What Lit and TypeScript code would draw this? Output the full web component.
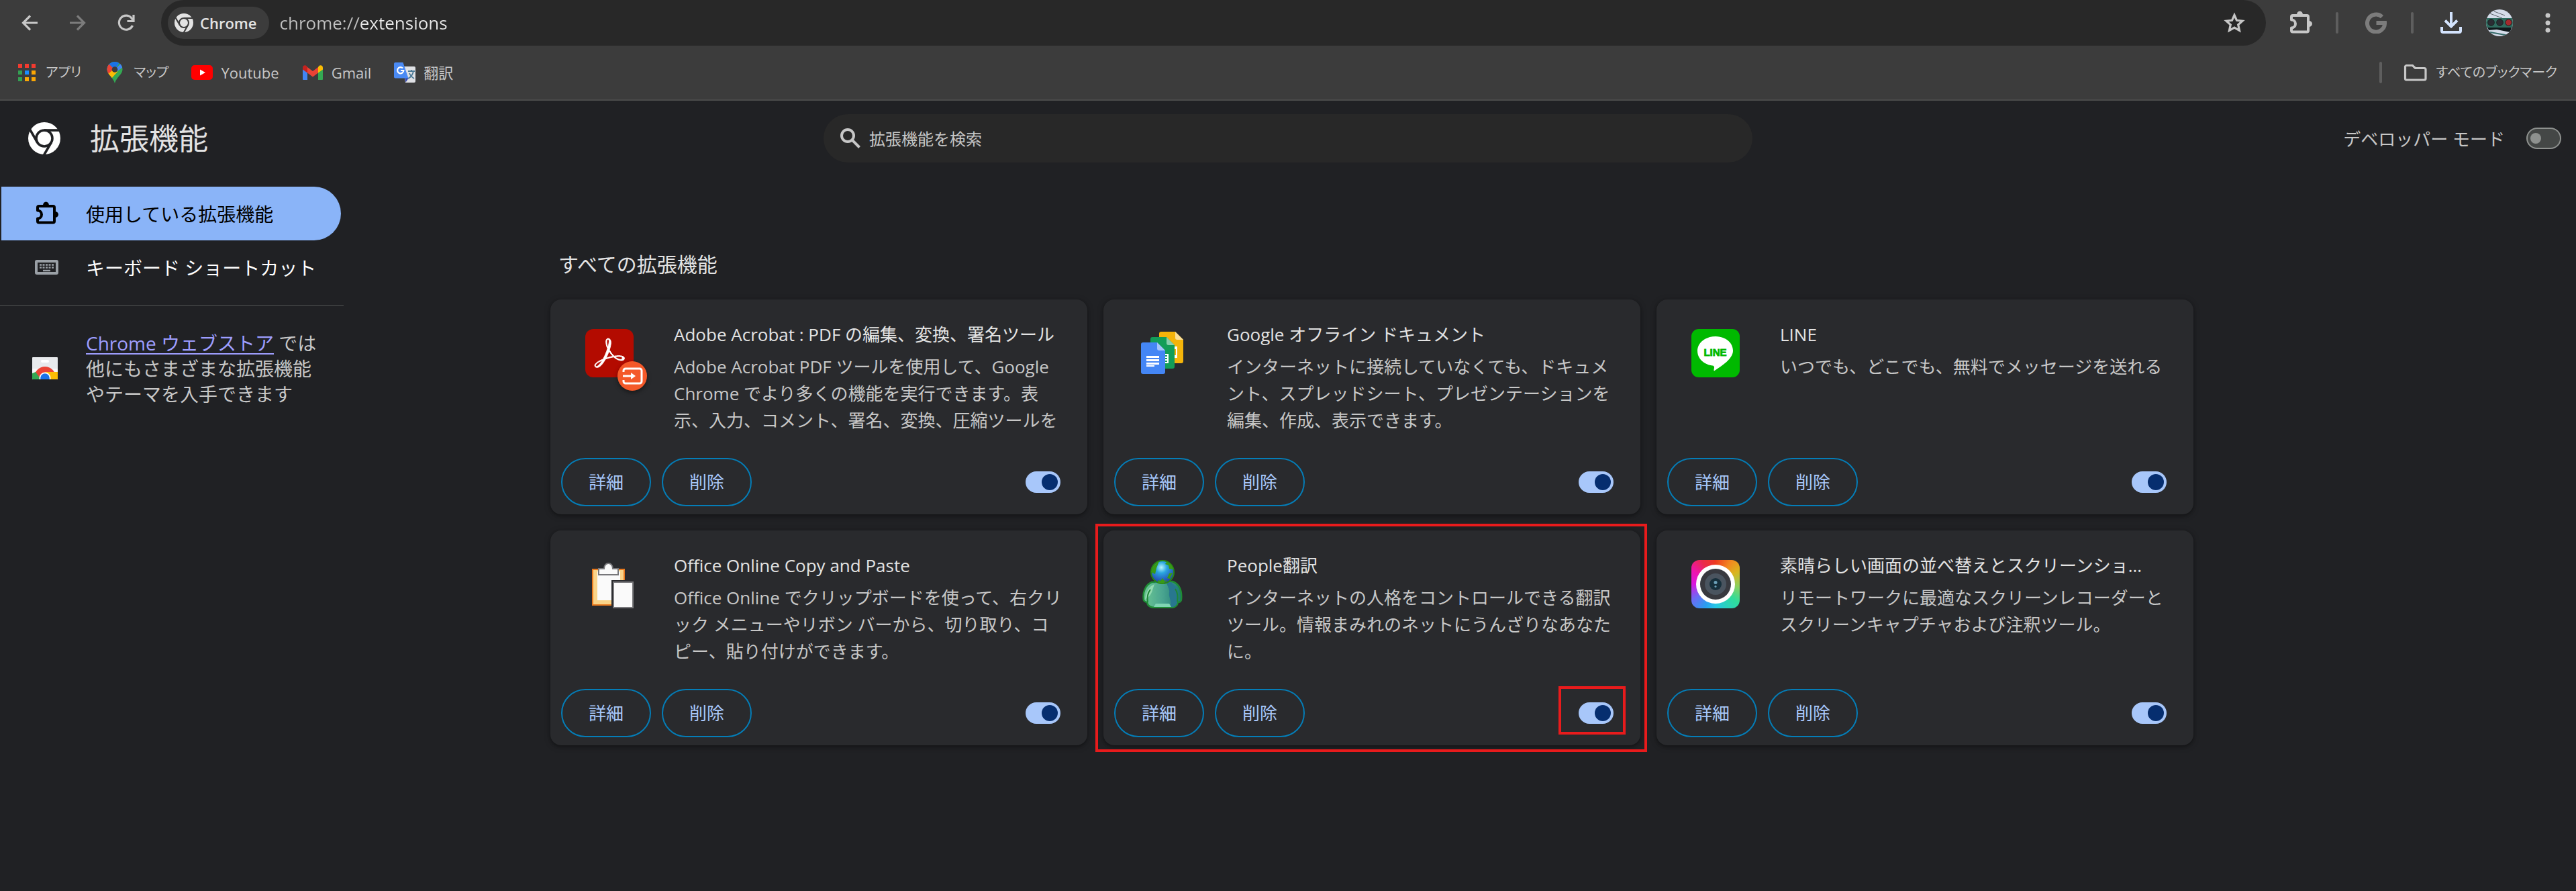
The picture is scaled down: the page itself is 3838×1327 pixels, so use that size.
import { LitElement, html, css, svg, nothing, TemplateResult } from "lit";
import { customElement, property } from "lit/decorators.js";

const chromeMark = (gap: string) => svg`
  <circle cx="24" cy="24" r="24" fill="currentColor"/>
  <g fill="none" stroke=${gap} stroke-width="3.6">
    <circle cx="24" cy="24" r="12"/>
    <path d="M24 12H48"/>
    <path d="M24 12H48" transform="rotate(120 24 24)"/>
    <path d="M24 12H48" transform="rotate(240 24 24)"/>
  </g>`;

const puzzle = svg`
  <path d="M5 7H26a2 2 0 0 1 2 2V29.500a2 2 0 0 1-2 2H5a2 2 0 0 1-2-2V25.500a5 5 0 0 0 0-12V9a2 2 0 0 1 2-2Z" fill="none" stroke="currentColor" stroke-width="4" stroke-linejoin="round"/>
  <path d="M11 6a4.500 5.500 0 0 1 9 0ZM29 15a5 4.500 0 0 1 0 9Z" fill="currentColor"/>`;

const acrobat = html`<svg class="logo" viewBox="0 0 72 72" aria-hidden="true">
  <rect width="72" height="72" rx="12" fill="#b30b00"/>
  <g transform="translate(14 13.500) scale(1.85)">
    <path fill="#fff" stroke="#fff" stroke-width=".5" d="M23.63 15.3c-.71-.745-2.166-1.17-4.224-1.17-1.1 0-2.377.106-3.761.354a19.443 19.443 0 0 1-2.307-2.661c-.532-.71-.994-1.49-1.42-2.236.817-2.484 1.207-4.507 1.207-5.962 0-1.632-.603-3.336-2.342-3.336-.532 0-1.065.32-1.349.781-.78 1.384-.425 4.4.923 7.381a60.277 60.277 0 0 1-1.703 4.507c-.568 1.349-1.207 2.733-1.917 4.01C2.834 18.53.314 20.34.03 21.758c-.106.533.071 1.03.462 1.42.142.107.639.533 1.49.533 2.59 0 5.323-4.188 6.707-6.707 1.065-.355 2.13-.71 3.194-.994a34.963 34.963 0 0 1 3.407-.745c2.732 2.448 5.145 2.839 6.352 2.839 1.49 0 2.023-.604 2.2-1.1.32-.64.106-1.349-.213-1.704zm-1.42 1.03c-.107.532-.64.887-1.384.887-.213 0-.39-.036-.604-.071-1.348-.32-2.626-.994-3.903-2.059a17.717 17.717 0 0 1 2.98-.248c.746 0 1.385.035 1.81.142.497.106 1.278.426 1.1 1.348zm-7.524-1.668a38.01 38.01 0 0 0-2.945.674 39.68 39.68 0 0 0-2.52.745 40.05 40.05 0 0 0 1.207-2.555c.426-.994.78-2.023 1.136-2.981.354.603.745 1.207 1.135 1.739a50.127 50.127 0 0 0 1.987 2.378zM10.038 1.46a.768.768 0 0 1 .674-.425c.745 0 .887.851.887 1.526 0 1.135-.355 2.874-.958 4.861-1.03-2.768-1.1-5.074-.603-5.962zM6.134 17.997c-1.81 2.981-3.549 4.826-4.613 4.826a.872.872 0 0 1-.532-.177c-.213-.213-.32-.461-.249-.745.213-1.065 2.271-2.555 5.394-3.904Z"/>
  </g></svg>`;

const page = (x: number, y: number, fill: string, fold: string) => svg`
  <g transform="translate(${x} ${y})">
    <path d="M3 0H24L36 12V44a3 3 0 0 1-3 3H3a3 3 0 0 1-3-3V3a3 3 0 0 1 3-3Z" fill=${fill}/>
    <path d="M24 0L36 12H27a3 3 0 0 1-3-3Z" fill=${fold}/>
  </g>`;

const docs = html`<svg class="logo" viewBox="0 0 72 72" aria-hidden="true">
  ${page(31, 4, "#f4b40a", "#fbe09a")}
  <rect x="48" y="26" width="10" height="17" fill="#fff"/><rect x="50" y="30" width="6" height="9" fill="#f4b40a"/>
  ${page(18, 12, "#129d58", "#88ceac")}
  <path d="M34 37H45V51H34Z" fill="#fff"/><path d="M34 39h9v2h-9Zm0 4h9v2h-9Zm0 4h9v2h-9Z" fill="#129d58"/>
  ${page(4, 20, "#4486f5", "#a5c6fb")}
  <path d="M12 40H31v3H12Zm0 5H31v3H12Zm0 5H31v3H12Zm0 4H24v2H12Z" fill="#fff"/>
</svg>`;

const line = html`<svg class="logo" viewBox="0 0 72 72" aria-hidden="true">
  <rect width="72" height="72" rx="11" fill="#00b900"/>
  <path d="M36 11c15 0 26 9.500 26 21.500C62 44 45 55.500 34.500 62c-1 .600-1.300-.200-1-1.500.800-3.500 1-5.500-2-6C18 52.500 9 44 9 32.500 9 20.500 21 11 36 11Z" fill="#fff"/>
  <text x="35.500" y="39.500" text-anchor="middle" class="line-word" fill="#00b900" stroke="#00b900" stroke-width=".8">LINE</text>
</svg>`;

const clipboard = html`<svg class="logo" viewBox="0 0 72 72" aria-hidden="true">
  <rect x="11" y="14" width="47" height="53" fill="#fad489" stroke="#e8791e" stroke-width="2"/>
  <rect x="18" y="17" width="34" height="43" fill="#fafafa"/>
  <path d="M39 30H60V68H39Z" fill="#292a2d"/>
  <path d="M20 13h8c0-5 3-8 6.500-8s6.500 3 6.500 8h8v9H20Z" fill="#fafafa" stroke="#77777a" stroke-width="2"/>
  <rect x="42" y="33" width="29" height="38" fill="#fafafa" stroke="#77777a" stroke-width="2"/>
</svg>`;

const people = html`<svg class="logo" viewBox="0 0 72 72" aria-hidden="true">
  <defs>
    <radialGradient id="globe" cx=".45" cy=".3" r=".7"><stop offset="0" stop-color="#b5f4fb"/><stop offset=".35" stop-color="#2aa5e0"/><stop offset="1" stop-color="#2338a8"/></radialGradient>
    <linearGradient id="body"><stop offset="0" stop-color="#6cc793"/><stop offset=".5" stop-color="#4aa590"/><stop offset="1" stop-color="#1c7872"/></linearGradient>
  </defs>
  <path d="M20 33C10 37 6 49 8 60c1 2 4 3 5 3 1 6 6 8 12 8h23c6 0 10-3 11-8 2 0 5-1 5-4 1-12-2-23-13-27Z" fill="url(#body)" stroke="#1f8c35" stroke-width="2.500"/>
  <path d="M24 34c4-2 14-3 18 0 1 5 5 9 4 15s4 13 2 21h4c8-3 6-11 7-17l-3-13-7-7Z" fill="#28778f"/>
  <path d="M10 59c5-3 9-7 11-14l3-9c-8 3-13 12-14 23Z" fill="#93dab0"/>
  <path d="M18 44c-4 5-5 13-4 19M55 43c4 6 4 13 3 19" fill="none" stroke="#1d8737" stroke-width="2"/>
  <path d="M26 65h20l3 5H23Z" fill="#80d6b3"/>
  <circle cx="36" cy="18" r="17" fill="url(#globe)" stroke="#278715" stroke-width="2"/>
  <path d="M22 9c4-2 5-6 9-7l-4 10-2 9-6-3Zm20-6c5 1 9 6 10 11l-6-1-1-5-5-2ZM46 20l5-1-4 9-4-1ZM29 30l4 1 3-4 3 4 5-1-7 5-7-1Z" fill="#389a15"/>
</svg>`;

const camera = html`<svg class="logo" viewBox="0 0 72 72" aria-hidden="true">
  <foreignObject width="72" height="72"><div class="spectrum"></div></foreignObject>
  <circle cx="36" cy="36" r="29" fill="#fff"/>
  <circle cx="36" cy="36" r="23" fill="#38393f"/>
  <circle cx="36" cy="36" r="16" fill="#4a545f"/>
  <circle cx="36" cy="36" r="9" fill="#17303c"/>
  <circle cx="36" cy="33.500" r="2.500" fill="#6ba0b8"/><circle cx="36" cy="39.500" r="1.500" fill="#6ba0b8"/>
</svg>`;

interface Extension {
  name: string;
  text: string;
  logo: TemplateResult;
  badge?: boolean;
  marked?: boolean;
}

const extensions: Extension[] = [
  { name: "Adobe Acrobat : PDF の編集、変換、署名ツール", text: "Adobe Acrobat PDF ツールを使用して、Google Chrome でより多くの機能を実行できます。表示、入力、コメント、署名、変換、圧縮ツールを", logo: acrobat, badge: true },
  { name: "Google オフライン ドキュメント", text: "インターネットに接続していなくても、ドキュメント、スプレッドシート、プレゼンテーションを編集、作成、表示できます。", logo: docs },
  { name: "LINE", text: "いつでも、どこでも、無料でメッセージを送れる", logo: line },
  { name: "Office Online Copy and Paste", text: "Office Online でクリップボードを使って、右クリック メニューやリボン バーから、切り取り、コピー、貼り付けができます。", logo: clipboard },
  { name: "People翻訳", text: "インターネットの人格をコントロールできる翻訳ツール。情報まみれのネットにうんざりなあなたに。", logo: people, marked: true },
  { name: "素晴らしい画面の並べ替えとスクリーンショ...", text: "リモートワークに最適なスクリーンレコーダーとスクリーンキャプチャおよび注釈ツール。", logo: camera },
];

const shared = css`
  * { box-sizing: border-box; }
  svg { display: block; flex: none; }
  button { font: inherit; border: 0; background: none; padding: 0; }
  a { color: inherit; text-decoration: none; }
  h1, h2, h3, p { margin: 0; font-weight: 400; }
`;

@customElement("toggle-switch")
export class ToggleSwitch extends LitElement {
  @property({ type: Boolean }) on = false;
  @property() label = "";

  static styles = css`
    :host { display: flex; }
    .switch {
      appearance: none; margin: 0; width: 52px; height: 32px; border-radius: 16px;
      display: flex; align-items: center; padding: 0 4px;
      background: #444746; border: 2px solid #8e918f;
    }
    .switch::before { content: ""; width: 16px; height: 16px; border-radius: 50%; background: #8e918f; }
    .switch:checked { background: #a8c7fa; border-color: #a8c7fa; justify-content: flex-end; padding: 0 2px; }
    .switch:checked::before { width: 24px; height: 24px; background: #062e6f; }
  `;

  render() {
    return html`<input class="switch" type="checkbox" role="switch" aria-label=${this.label} .checked=${this.on}>`;
  }
}

@customElement("extension-card")
export class ExtensionCard extends LitElement {
  @property({ attribute: false }) item!: Extension;

  static styles = [shared, css`
    :host { display: block; position: relative; min-width: 0; }
    .card {
      display: flex; flex-direction: column; gap: 36px; height: 100%;
      padding: 32px 16px 12px; border-radius: 16px; background: #292a2d;
      box-shadow: 0 2px 4px rgba(0,0,0,.3), 0 2px 8px 2px rgba(0,0,0,.15);
    }
    .info { display: flex; gap: 60px; padding: 0 16px 0 36px; }
    .picture { position: relative; flex: none; width: 72px; height: 72px; margin-top: 12px; }
    .logo { width: 72px; height: 72px; }
    .badge { position: absolute; left: 48px; top: 48px; width: 44px; height: 44px; filter: drop-shadow(0 3px 3px rgba(0,0,0,.4)); }
    .spectrum {
      width: 72px; height: 72px; border-radius: 12px;
      background: conic-gradient(from 0deg, #ee3a1f, #f28a20 35deg, #d9b51e 60deg, #8fd05c 95deg, #2fdc9c 130deg, #25c6e6 180deg, #2a9df0 205deg, #6a6cf5 235deg, #d916e0 270deg, #ee14b0 300deg, #ea2a4a 330deg, #ee3a1f);
    }
    .line-word { font: 700 15px "Liberation Sans", sans-serif; }
    .words { flex: 1; min-width: 0; display: flex; flex-direction: column; gap: 8px; line-height: 40px; }
    .name { font-size: 26px; color: #e3e3e3; white-space: nowrap; overflow: hidden; text-overflow: ellipsis; }
    .text { font-size: 26px; color: #c7c7c7; min-height: 120px; line-break: loose; }
    .actions { display: flex; align-items: center; gap: 16px; }
    .action {
      height: 72px; padding: 0 39px; border: 2px solid #047db7; border-radius: 36px;
      color: #a8c7fa; font-size: 26px; line-height: 40px;
    }
    .state { margin-left: auto; margin-right: 24px; position: relative; }
    .mark { position: absolute; border: 4px solid #e81b1c; pointer-events: none; }
    .mark-card { inset: -10px -10px -10px -12px; }
    .mark-state { inset: -24px -18px -16px -30px; }
  `];

  render() {
    const { name, text, logo, badge, marked } = this.item;
    return html`
      <article class="card" lang="ja">
        <div class="info">
          <div class="picture">
            ${logo}
            ${badge ? html`<svg class="badge" viewBox="0 0 44 44" aria-hidden="true">
              <circle cx="22" cy="22" r="22" fill="#f4592a"/>
              <path d="M9 16v-2a3 3 0 0 1 3-3h21a3 3 0 0 1 3 3v16a3 3 0 0 1-3 3H12a3 3 0 0 1-3-3v-2M8 22h14" fill="none" stroke="#fff" stroke-width="3"/>
              <path d="M20 17l7 5-7 5Z" fill="#fff"/>
            </svg>` : nothing}
          </div>
          <div class="words">
            <h3 class="name">${name}</h3>
            <p class="text">${text}</p>
          </div>
        </div>
        <div class="actions">
          <button class="action">詳細</button>
          <button class="action">削除</button>
          <div class="state">
            <toggle-switch on label=${name}></toggle-switch>
            ${marked ? html`<div class="mark mark-state"></div>` : nothing}
          </div>
        </div>
      </article>
      ${marked ? html`<div class="mark mark-card"></div>` : nothing}`;
  }
}

@customElement("browser-bar")
export class BrowserBar extends LitElement {
  static styles = [shared, css`
    :host { display: block; background: #3c3c3c; color: #c7c7c7; border-bottom: 2px solid #4a4b4b; }
    .toolbar { display: flex; align-items: center; height: 68px; padding: 0 6px 0 8px; }
    .tool { width: 72px; height: 68px; display: flex; align-items: center; justify-content: center; color: #c7c7c7; flex: none; }
    .dim { color: #7c7c7c; }
    .blue { color: #d3e3fd; }
    .omnibox {
      flex: 1; min-width: 0; height: 68px; margin: 0 16px; padding: 0 30px 0 10px; border-radius: 34px;
      background: #282828; display: flex; align-items: center; gap: 16px;
    }
    .chip {
      height: 48px; padding: 0 18px 0 10px; border-radius: 24px; background: #3c3c3c; color: #e3e3e3;
      display: flex; align-items: center; gap: 10px; font-size: 22px; font-weight: 600;
    }
    .address {
      flex: 1; min-width: 0; border: 0; outline: 0; padding: 0; height: 48px; font: inherit; font-size: 26px;
      color: transparent; background: linear-gradient(90deg, #c0c0c0 118px, #e8e8e8 118px); -webkit-background-clip: text; background-clip: text;
    }
    .rule { width: 4px; height: 32px; border-radius: 2px; background: #5e5e5e; flex: none; }
    .toolbar .rule { margin: 0 20px 0 16px; }
    .bookmarks { display: flex; align-items: center; gap: 34px; height: 80px; padding: 0 28px 0 24px; font-size: 22px; font-feature-settings: "palt"; }
    .bookmark { display: flex; align-items: center; gap: 12px; line-height: 32px; white-space: nowrap; }
    .all { margin-left: auto; display: flex; align-items: center; gap: 32px; }
    .kana { font-size: 20px; }
  `];

  render() {
    const dots = ["#f33a2f", "#f33a2f", "#f33a2f", "#34a053", "#1a8cff", "#fba705", "#34a053", "#fba705", "#fba705"];
    return html`
      <div class="toolbar">
        <button class="tool" aria-label="戻る"><svg width="24" height="24" viewBox="0 0 24 24" fill="none" stroke="currentColor" stroke-width="3.200"><path d="M13 1.500L2.500 12 13 22.500M2 12H24"/></svg></button>
        <button class="tool dim" aria-label="進む"><svg width="24" height="24" viewBox="0 0 24 24" fill="none" stroke="currentColor" stroke-width="3.200"><path d="M11 1.500L21.500 12 11 22.500M22 12H0"/></svg></button>
        <button class="tool" aria-label="再読み込み"><svg width="26" height="26" viewBox="0 0 26 26" fill="none" stroke="currentColor" stroke-width="3.200"><path d="M22.500 17A10.500 10.500 0 1 1 21 6l3 4"/><path d="M24 1V10.500H14.500"/></svg></button>
        <div class="omnibox">
          <button class="chip"><svg width="28" height="28" viewBox="0 0 48 48">${chromeMark("#3c3c3c")}</svg>Chrome</button>
          <input class="address" aria-label="アドレス" value="chrome://extensions">
          <button aria-label="ブックマークに追加"><svg width="34" height="32" viewBox="0 0 34 32"><path d="M17 4.500L20.500 12.300 29 13.200 22.700 18.900 24.500 27.300 17 23 9.500 27.300 11.300 18.900 5 13.200 13.500 12.300Z" fill="none" stroke="#c7c7c7" stroke-width="3.200"/></svg></button>
        </div>
        <button class="tool" aria-label="拡張機能"><svg width="34" height="36" viewBox="0 0 34 36">${puzzle}</svg></button>
        <span class="rule"></span>
        <button class="tool dim" aria-label="Google"><svg width="32" height="32" viewBox="0 0 32 32" fill="none" stroke="currentColor" stroke-width="6"><path d="M25 7.200A13 13 0 1 0 29 16H16.500"/></svg></button>
        <span class="rule"></span>
        <button class="tool blue" aria-label="ダウンロード"><svg width="32" height="32" viewBox="0 0 32 32" fill="none" stroke="currentColor" stroke-width="4"><path d="M16 0V21M7 12.500l9 9 9-9M2 22v6a2 2 0 0 0 2 2h24a2 2 0 0 0 2-2v-6"/></svg></button>
        <button class="tool" aria-label="プロフィール"><svg width="40" height="40" viewBox="0 0 40 40">
          <defs><clipPath id="face"><circle cx="20" cy="20" r="20"/></clipPath></defs>
          <g clip-path="url(#face)">
            <rect width="40" height="40" fill="#d5dcea"/>
            <path d="M3 5L24 13M12 3l16 6" stroke="#3c4148" stroke-width=".8"/>
            <rect y="13" width="40" height="14" fill="#2f6b5f"/>
            <g fill="#2b2c33" stroke="#17211f"><circle cx="7.500" cy="19.500" r="4.800"/><circle cx="20.500" cy="19.500" r="4.800"/><circle cx="33.500" cy="19.500" r="4.800" fill="#a32a2e"/></g>
            <path d="M2 27H38L36 34 16 30 4 31Z" fill="#10191c"/>
            <path d="M6 34l28 5" stroke="#376d6b" stroke-width="2"/>
          </g></svg></button>
        <button class="tool" aria-label="メニュー"><svg width="8" height="30" viewBox="0 0 8 30" fill="currentColor"><circle cx="4" cy="4" r="3.500"/><circle cx="4" cy="15" r="3.500"/><circle cx="4" cy="26" r="3.500"/></svg></button>
      </div>
      <nav class="bookmarks">
        <a class="bookmark" href="#apps"><svg width="32" height="32" viewBox="0 0 32 32">${dots.map((c, i) => svg`<rect x=${3 + (i % 3) * 10} y=${3 + Math.floor(i / 3) * 10} width="6" height="6" fill=${c}/>`)}</svg><span class="kana">アプリ</span></a>
        <a class="bookmark" href="#maps"><svg width="32" height="32" viewBox="0 0 32 32">
          <defs><clipPath id="pin"><path d="M16 0a11.500 11.500 0 0 1 11.500 11.500C27.500 19 19 22 16 32 13 22 4.500 19 4.500 11.500A11.500 11.500 0 0 1 16 0Z"/></clipPath></defs>
          <g clip-path="url(#pin)"><rect width="32" height="32" fill="#34a853"/><path d="M0 12L16 12 24 0H0Z" fill="#1a73e8"/><path d="M16 11.500L28 0v8l-8 6Z" fill="#4285f4"/><path d="M0 5l8-1 8 8L8 22 0 20Z" fill="#ea4335"/><path d="M5 19L17 9l3 6L10 26Z" fill="#fbbc04"/></g>
          <circle cx="16" cy="11.500" r="4.300" fill="#3c3c3c"/></svg><span class="kana">マップ</span></a>
        <a class="bookmark" href="#youtube"><svg width="32" height="32" viewBox="0 0 32 32"><rect y="5" width="32" height="22" rx="5" fill="#f00"/><path d="M13 11.500V20.500L21 16Z" fill="#fff"/></svg>Youtube</a>
        <a class="bookmark" href="#gmail"><svg width="32" height="32" viewBox="0 0 32 32"><path d="M1 9V26a1 1 0 0 0 1 1H8V13Z" fill="#4285f4"/><path d="M31 9V26a1 1 0 0 1-1 1H24V13Z" fill="#34a853"/><path d="M8 8l8 6 8-6V16.500L16 22.500 8 16.500Z" fill="#ea4335"/><path d="M1 9c0-4 4-4.500 6-2.500L8 8V16.500L1 11.500Z" fill="#c5221f"/><path d="M31 9c0-4-4-4.500-6-2.500L24 8V16.500L31 11.500Z" fill="#fbbc04"/></svg>Gmail</a>
        <a class="bookmark" href="#translate"><svg width="32" height="32" viewBox="0 0 32 32"><path d="M13 7H30a2 2 0 0 1 2 2V29a2 2 0 0 1-2 2H17Z" fill="#dfe1e5"/><path d="M16 24l6 0-4.500 6.500Z" fill="#3547b0"/><path d="M21 14H31M26 12V14M29 14C28 19 25 23 21 25M23 17c1 3 4 6 7 8" fill="none" stroke="#4c7a96" stroke-width="1.800"/><path d="M2 1H13.500L21.500 24.500H2a2 2 0 0 1-2-2V3a2 2 0 0 1 2-2Z" fill="#4a8af4"/><path d="M13 9.500A4.600 4.600 0 1 0 14.300 13H10" fill="none" stroke="#fff" stroke-width="2.200"/></svg>翻訳</a>
        <div class="all">
          <span class="rule"></span>
          <a class="bookmark" href="#all"><svg width="36" height="28" viewBox="0 0 36 28"><path d="M4 3.500H13.500L17.500 7.500H31a2 2 0 0 1 2 2V23a2 2 0 0 1-2 2H4.500a2 2 0 0 1-2-2V5a2 2 0 0 1 2-1.500Z" fill="none" stroke="#c7c7c7" stroke-width="3.200"/></svg><span class="kana">すべてのブックマーク</span></a>
        </div>
      </nav>`;
  }
}

@customElement("side-menu")
export class SideMenu extends LitElement {
  static styles = [shared, css`
    :host { display: block; color: #fff; }
    .menu { display: flex; flex-direction: column; padding: 16px 4px 16px 2px; border-bottom: 2px solid #3a3c3d; }
    .entry {
      display: flex; align-items: center; gap: 40px; height: 80px; padding-left: 50px;
      border-radius: 0 40px 40px 0; font-size: 28px; white-space: nowrap;
    }
    .entry.active { background: #8ab4f8; color: #000; }
    .entry.quiet svg { color: #9aa0a6; }
    .store { display: flex; align-items: center; gap: 40px; padding: 36px 24px 0 48px; font-size: 28px; line-height: 38px; color: #c7c7c7; }
    .store p { flex: 1; }
    .link { color: #9e9eff; text-decoration: underline; text-decoration-thickness: 2px; text-underline-offset: 4px; }
  `];

  render() {
    return html`
      <nav class="menu">
        <a class="entry active" href="#installed"><svg width="36" height="36" viewBox="0 0 34 36">${puzzle}</svg>使用している拡張機能</a>
        <a class="entry quiet" href="#shortcuts"><svg width="36" height="24" viewBox="0 0 36 24">
          <rect x="2" y="3" width="31" height="18" rx="1" fill="none" stroke="currentColor" stroke-width="4"/>
          <path d="M7 8.500H29M7 12.500H29" stroke="currentColor" stroke-width="2.600" stroke-dasharray="3 1.500"/><path d="M12 17h11" stroke="currentColor" stroke-width="2.400"/></svg>キーボード ショートカット</a>
      </nav>
      <div class="store">
        <svg width="40" height="34" viewBox="0 0 40 34" aria-hidden="true">
          <defs><clipPath id="bag"><rect width="38" height="33" rx="1"/></clipPath></defs>
          <g clip-path="url(#bag)"><rect width="38" height="34" fill="#e8eaed"/><rect y="17" width="38" height="17" fill="#f7f8f9"/>
          <rect x="13" y="4" width="12" height="4" rx="2" fill="#fff"/>
          <circle cx="19" cy="30" r="16" fill="#ea4335"/><path d="M5 22l10 14H0V24Z" fill="#34a853"/><path d="M19 22H38V36H24Z" fill="#fbbc04"/>
          <circle cx="19" cy="31" r="8.500" fill="#fff"/><circle cx="19" cy="31" r="6.800" fill="#1a73e8"/></g></svg>
        <p><a class="link" href="#store">Chrome ウェブストア</a> では他にもさまざまな拡張機能やテーマを入手できます</p>
      </div>`;
  }
}

@customElement("app-root")
export class AppRoot extends LitElement {
  static styles = [shared, css`
    :host {
      display: flex; flex-direction: column; min-height: 100vh; background: #202124; color: #e3e3e3;
      font-family: "Open Sans", "Noto Sans CJK JP", sans-serif;
    }
    .top { display: grid; grid-template-columns: 1fr minmax(0, 1384px) 1fr; align-items: center; height: 112px; padding: 0 22px; }
    .brand { display: flex; align-items: center; gap: 44px; padding-left: 20px; color: #fff; }
    .brand h1 { font-size: 44px; line-height: 56px; color: #e3e3e3; white-space: nowrap; }
    .search { display: flex; align-items: center; gap: 12px; height: 72px; padding: 0 24px; border-radius: 36px; background: #282828; color: #c7c7c7; }
    .field { flex: 1; min-width: 0; border: 0; outline: 0; padding: 0; background: none; color: #e3e3e3; font: inherit; font-size: 24px; }
    .field::placeholder { color: #c7c7c7; opacity: 1; }
    .developer { display: flex; align-items: center; justify-content: flex-end; gap: 32px; font-size: 26px; color: #c7c7c7; white-space: nowrap; }
    .body { display: flex; flex: 1; align-items: flex-start; }
    .side { flex: none; width: 512px; }
    .content { flex: 1; min-width: 0; padding: 112px 262px 32px 0; display: flex; justify-content: center; }
    .list { flex: 0 1 2448px; min-width: 0; }
    .list h2 { font-size: 30px; line-height: 40px; padding-left: 12px; margin-bottom: 32px; }
    .cards { display: grid; grid-template-columns: repeat(3, minmax(0, 1fr)); gap: 24px; }
  `];

  render() {
    return html`
      <browser-bar></browser-bar>
      <header class="top">
        <div class="brand"><svg width="48" height="48" viewBox="0 0 48 48">${chromeMark("#202124")}</svg><h1>拡張機能</h1></div>
        <label class="search">
          <svg width="32" height="32" viewBox="0 0 32 32" fill="none" stroke="currentColor" stroke-width="4"><circle cx="12" cy="12" r="9"/><path d="M18.500 18.500L29.500 29.500"/></svg>
          <input class="field" type="search" placeholder="拡張機能を検索" aria-label="拡張機能を検索">
        </label>
        <div class="developer"><span>デベロッパー モード</span><toggle-switch label="デベロッパー モード"></toggle-switch></div>
      </header>
      <div class="body">
        <side-menu class="side"></side-menu>
        <main class="content">
          <section class="list">
            <h2>すべての拡張機能</h2>
            <div class="cards">${extensions.map((item) => html`<extension-card .item=${item}></extension-card>`)}</div>
          </section>
        </main>
      </div>`;
  }
}
